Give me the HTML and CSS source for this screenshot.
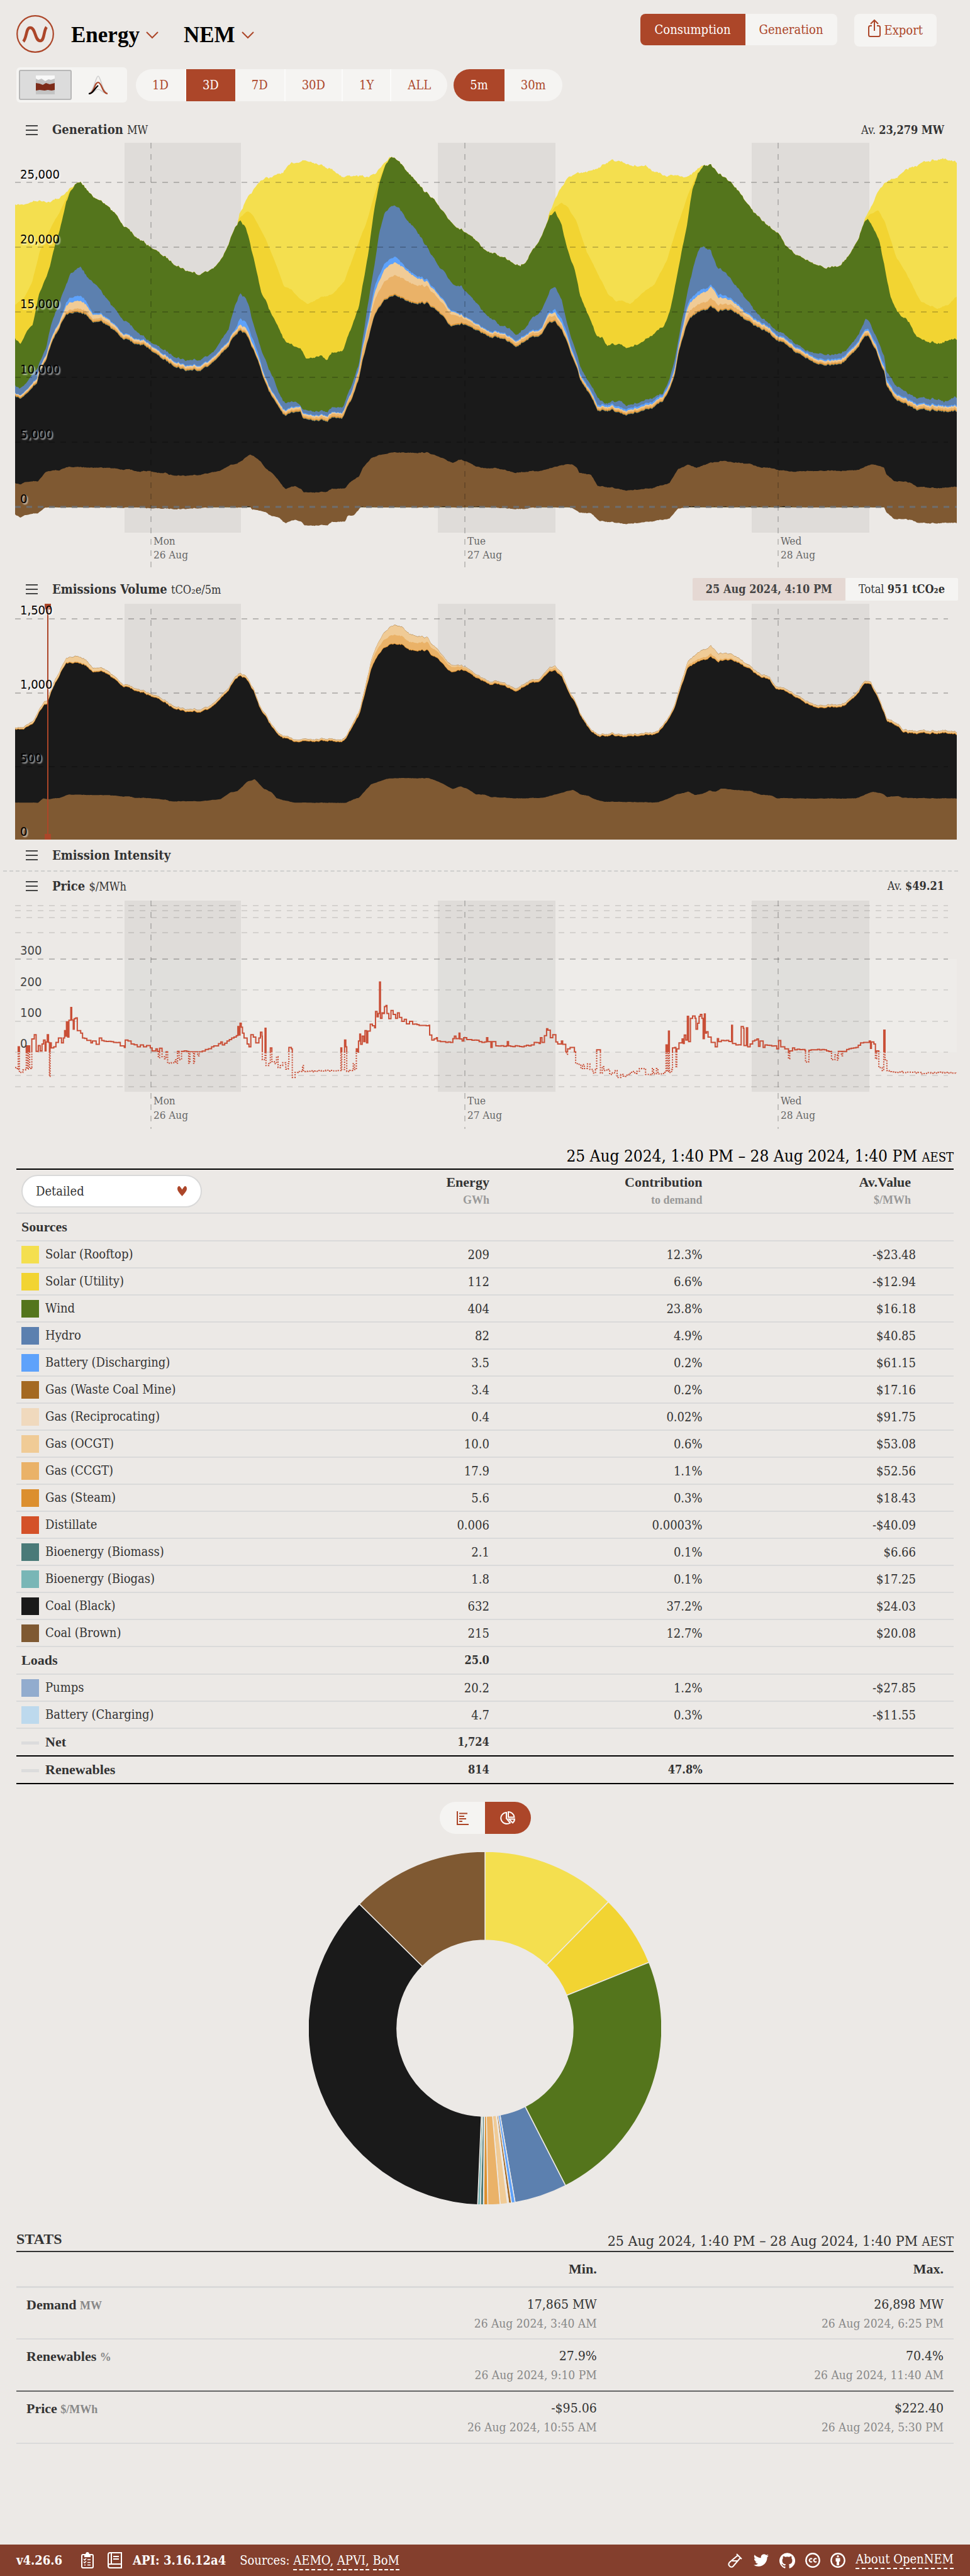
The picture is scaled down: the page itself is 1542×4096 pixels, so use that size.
FILE: index.html
```html
<!DOCTYPE html>
<html lang="en">
<head>
<meta charset="utf-8">
<meta name="viewport" content="width=device-width, initial-scale=1">
<title>OpenNEM: NEM</title>
<link rel="stylesheet" href="styles.css">
</head>
<body>
<header class="topbar">
  <nav class="brand" aria-label="Main">
    <a class="logo" href="#" aria-label="OpenNEM home">
      <svg width="60" height="60" viewBox="0 0 60 60"><circle cx="30" cy="30" r="28.8" fill="none" stroke="#ac4629" stroke-width="2.2"/><path d="M11 42C17 36 15 20 22 20C31 20 29 41 38 41C45 41 43 25 48 19" fill="none" stroke="#ac4629" stroke-width="4.6"/></svg>
    </a>
    <button class="menu" type="button">Energy <svg width="20" height="12" viewBox="0 0 20 12"><path d="M1 1l9 9 9-9"/></svg></button>
    <button class="menu" type="button">NEM <svg width="20" height="12" viewBox="0 0 20 12"><path d="M1 1l9 9 9-9"/></svg></button>
  </nav>
  <div class="actions">
    <div class="group">
      <button class="on" type="button">Consumption</button><button type="button">Generation</button>
    </div>
    <button class="export" type="button"><svg width="20" height="28" viewBox="0 0 20 28"><path d="M6 10H3.5Q1 10 1 12.500V24.500Q1 27 3.500 27H16.500Q19 27 19 24.500V12.500Q19 10 16.500 10H14M10 18V1.500M4 7l6-6 6 6"/></svg>Export</button>
  </div>
</header>

<div class="filters">
  <div class="views">
    <button class="on" type="button" aria-label="Time series">
      <svg width="30" height="30" viewBox="0 0 30 30"><path fill="#f8f8f8" d="M0 0H30V12H0z"/><path fill="#c3c3c3" d="M0 5l4 2 5-2 6 4 5-3 4 1 6-2V30H0z"/><path fill="#7d2c1a" d="M0 12l6 1 5 2 5-3 6 2 8-2V23l-5 1-6-1-5 1-8-1-6 1z"/></svg>
    </button>
    <button type="button" aria-label="Time of day">
      <svg width="30" height="30" viewBox="0 0 30 30" fill="none"><path stroke="#ccc" stroke-width="1.500" d="M0 28C8 28 11 1 15 1S22 28 30 28M2 28C9 28 10 22 15 22S21 28 28 28"/><path stroke="#ac4629" stroke-width="2.200" d="M1 29C9 28 9 11 15 11S21 28 30 29"/><path stroke="#000" stroke-width="2.200" d="M0 29C7 29 8 22 15 16"/></svg>
    </button>
  </div>
  <div class="pills range">
    <button type="button">1D</button><button class="on" type="button">3D</button><button type="button">7D</button><button type="button">30D</button><button type="button">1Y</button><button type="button">ALL</button>
  </div>
  <div class="pills interval">
    <button class="on" type="button">5m</button><button type="button">30m</button>
  </div>
</div>

<main>
  <section class="panel">
    <div class="panel-head">
      <button class="burger" type="button" aria-label="Generation options"></button>
      <h2>Generation <small>MW</small></h2>
      <p class="avg">Av. <b>23,279 MW</b></p>
    </div>
    <svg class="chart" id="generation" viewBox="0 0 1497 676" role="img" aria-label="Generation by source"></svg>
  </section>

  <section class="panel">
    <div class="panel-head">
      <button class="burger" type="button" aria-label="Emissions options"></button>
      <h2>Emissions Volume <small>tCO₂e/5m</small></h2>
      <p class="readout"><b class="when">25 Aug 2024, 4:10 PM</b><span class="total">Total <b>951 tCO₂e</b></span></p>
    </div>
    <svg class="chart" id="emissions" viewBox="0 0 1497 375" role="img" aria-label="Emissions volume"></svg>
  </section>

  <section class="panel closed">
    <div class="panel-head">
      <button class="burger" type="button" aria-label="Intensity options"></button>
      <h2>Emission Intensity</h2>
    </div>
  </section>

  <section class="panel">
    <div class="panel-head">
      <button class="burger" type="button" aria-label="Price options"></button>
      <h2>Price <small>$/MWh</small></h2>
      <p class="avg">Av. <b>$49.21</b></p>
    </div>
    <svg class="chart" id="price" viewBox="0 0 1497 364" role="img" aria-label="Price"></svg>
  </section>

  <section class="summary">
    <p class="period">25 Aug 2024, 1:40 PM – 28 Aug 2024, 1:40 PM <small>AEST</small></p>
    <table class="sources">
      <colgroup><col class="c1"><col class="c2"><col class="c3"><col class="c4"></colgroup>
      <thead>
        <tr>
          <th scope="col"><div class="select"><select aria-label="Grouping"><option>Detailed</option></select><svg width="15" height="16" viewBox="0 0 15 16"><path fill="#ac4629" d="M0 4.500Q0 0 3 0 4 0 7.500 5.500 11 0 12 0 15 0 15 4.500 15 8 7.500 16 0 8 0 4.500z"/></svg></div></th>
          <th scope="col">Energy<small>GWh</small></th>
          <th scope="col">Contribution<small>to demand</small></th>
          <th scope="col">Av.Value<small>$/MWh</small></th>
        </tr>
      </thead>
      <tbody>
        <tr class="head"><th scope="row">Sources</th><td></td><td></td><td></td></tr>
        <tr><th scope="row"><i class="rooftop"></i>Solar (Rooftop)</th><td>209</td><td>12.3%</td><td>-$23.48</td></tr>
        <tr><th scope="row"><i class="utility"></i>Solar (Utility)</th><td>112</td><td>6.6%</td><td>-$12.94</td></tr>
        <tr><th scope="row"><i class="wind"></i>Wind</th><td>404</td><td>23.8%</td><td>$16.18</td></tr>
        <tr><th scope="row"><i class="hydro"></i>Hydro</th><td>82</td><td>4.9%</td><td>$40.85</td></tr>
        <tr><th scope="row"><i class="discharging"></i>Battery (Discharging)</th><td>3.5</td><td>0.2%</td><td>$61.15</td></tr>
        <tr><th scope="row"><i class="waste"></i>Gas (Waste Coal Mine)</th><td>3.4</td><td>0.2%</td><td>$17.16</td></tr>
        <tr><th scope="row"><i class="recip"></i>Gas (Reciprocating)</th><td>0.4</td><td>0.02%</td><td>$91.75</td></tr>
        <tr><th scope="row"><i class="ocgt"></i>Gas (OCGT)</th><td>10.0</td><td>0.6%</td><td>$53.08</td></tr>
        <tr><th scope="row"><i class="ccgt"></i>Gas (CCGT)</th><td>17.9</td><td>1.1%</td><td>$52.56</td></tr>
        <tr><th scope="row"><i class="steam"></i>Gas (Steam)</th><td>5.6</td><td>0.3%</td><td>$18.43</td></tr>
        <tr><th scope="row"><i class="distillate"></i>Distillate</th><td>0.006</td><td>0.0003%</td><td>-$40.09</td></tr>
        <tr><th scope="row"><i class="biomass"></i>Bioenergy (Biomass)</th><td>2.1</td><td>0.1%</td><td>$6.66</td></tr>
        <tr><th scope="row"><i class="biogas"></i>Bioenergy (Biogas)</th><td>1.8</td><td>0.1%</td><td>$17.25</td></tr>
        <tr><th scope="row"><i class="black"></i>Coal (Black)</th><td>632</td><td>37.2%</td><td>$24.03</td></tr>
        <tr><th scope="row"><i class="brown"></i>Coal (Brown)</th><td>215</td><td>12.7%</td><td>$20.08</td></tr>
        <tr class="head"><th scope="row">Loads</th><td>25.0</td><td></td><td></td></tr>
        <tr><th scope="row"><i class="pumps"></i>Pumps</th><td>20.2</td><td>1.2%</td><td>-$27.85</td></tr>
        <tr><th scope="row"><i class="charging"></i>Battery (Charging)</th><td>4.7</td><td>0.3%</td><td>-$11.55</td></tr>
        <tr class="head strong"><th scope="row"><i class="dash"></i>Net</th><td>1,724</td><td></td><td></td></tr>
        <tr class="head strong"><th scope="row"><i class="dash"></i>Renewables</th><td>814</td><td>47.8%</td><td></td></tr>
      </tbody>
    </table>

    <div class="toggle">
      <button type="button" aria-label="Bar chart"><svg width="20" height="22" viewBox="0 0 20 22"><path d="M2 0V21H20M5 3.500H18M5 8H13M5 12H16M5 16H10"/></svg></button>
      <button class="on" type="button" aria-label="Pie chart"><svg width="24" height="22" viewBox="0 0 24 22"><path d="M10 2A9.500 9 0 1 0 16 18.500L10 11.500zM13 1V9.500H22.500A9.500 9 0 0 0 13 1zM14 12.500H23Q23 16 20 18.500z"/></svg></button>
    </div>
    <svg class="donut" id="donut" viewBox="0 0 560 560" role="img" aria-label="Share of energy by source"></svg>
  </section>

  <section class="stats">
    <div class="stats-head"><h2>STATS</h2><p>25 Aug 2024, 1:40 PM – 28 Aug 2024, 1:40 PM <small>AEST</small></p></div>
    <table>
      <colgroup><col class="s1"><col class="s2"><col class="s3"></colgroup>
      <thead><tr><td></td><th scope="col">Min.</th><th scope="col">Max.</th></tr></thead>
      <tbody>
        <tr><th scope="row">Demand <small>MW</small></th><td>17,865 MW<time>26 Aug 2024, 3:40 AM</time></td><td>26,898 MW<time>26 Aug 2024, 6:25 PM</time></td></tr>
        <tr class="rule"><th scope="row">Renewables <small>%</small></th><td>27.9%<time>26 Aug 2024, 9:10 PM</time></td><td>70.4%<time>26 Aug 2024, 11:40 AM</time></td></tr>
        <tr><th scope="row">Price <small>$/MWh</small></th><td>-$95.06<time>26 Aug 2024, 10:55 AM</time></td><td>$222.40<time>26 Aug 2024, 5:30 PM</time></td></tr>
      </tbody>
    </table>
  </section>
</main>

<footer>
  <div class="foot-left">
    <b class="version">v4.26.6</b>
    <a href="#" aria-label="Changelog"><svg width="20" height="26" viewBox="0 0 20 26" fill="none" stroke="#fff" stroke-width="2"><rect x="1" y="4" width="18" height="21" rx="2"/><path fill="#fff" d="M6 4H8Q8 1 10 1T12 4H14V7H6z"/><path stroke-width="1.600" d="M4 11l1.500 1.500L8 10M10 12H15M4 15.500l1.500 1.500L8 14.500M10 16.500H15M5 20.500H7M10 20.500H15"/></svg></a>
    <a href="#" aria-label="Documentation"><svg width="23" height="26" viewBox="0 0 23 26" fill="none" stroke="#fff" stroke-width="2"><path d="M4 1H22V25H4Q1 25 1 22V4Q1 1 4 1zM1 21Q1 19 4 19H22M6 1V19M9 7H18M9 11H18"/></svg></a>
    <b class="api">API: 3.16.12a4</b>
    <span>Sources: <a class="link" href="#">AEMO,</a> <a class="link" href="#">APVI,</a> <a class="link" href="#">BoM</a></span>
  </div>
  <div class="foot-right">
    <a href="#" aria-label="Labs"><svg width="24" height="24" viewBox="0 0 24 24" fill="none" stroke="#fff" stroke-width="2"><path d="M14 2L22 10M16 4L2.500 15.500Q0 19 3 21.500T8.500 21.500L20 8M7 13H15"/></svg></a>
    <a href="#" aria-label="Twitter"><svg width="26" height="24" viewBox="0 0 24 24" fill="#fff"><path d="M23.950 4.570a10 10 0 0 1-2.820.770 4.960 4.960 0 0 0 2.160-2.720c-.950.550-2 .950-3.120 1.180a4.920 4.920 0 0 0-8.380 4.480C7.690 8.090 4.070 6.130 1.640 3.160a4.920 4.920 0 0 0 1.520 6.570 4.900 4.900 0 0 1-2.230-.610v.060a4.920 4.920 0 0 0 3.950 4.830 5 5 0 0 1-2.210.080 4.940 4.940 0 0 0 4.600 3.420A9.870 9.870 0 0 1 0 19.540a14 14 0 0 0 7.550 2.210c9.050 0 14-7.500 14-13.980v-.640a10 10 0 0 0 2.400-2.560z"/></svg></a>
    <a href="#" aria-label="GitHub"><svg width="25" height="25" viewBox="0 0 24 24" fill="#fff"><path d="M12 .300a12 12 0 0 0-3.800 23.380c.600.120.830-.260.830-.570v-2.230c-3.340.720-4.040-1.420-4.040-1.420-.550-1.390-1.330-1.760-1.330-1.760-1.090-.740.080-.730.080-.730 1.200.090 1.840 1.240 1.840 1.240 1.070 1.830 2.810 1.300 3.490 1 .110-.780.420-1.310.760-1.610-2.660-.300-5.470-1.330-5.470-5.930 0-1.310.470-2.380 1.240-3.220-.140-.300-.540-1.520.100-3.180 0 0 1.010-.320 3.300 1.230a11.500 11.500 0 0 1 6.020 0c2.280-1.550 3.290-1.230 3.290-1.230.640 1.660.240 2.880.120 3.180a4.650 4.650 0 0 1 1.230 3.220c0 4.610-2.800 5.630-5.480 5.920.420.360.810 1.100.810 2.220v3.300c0 .320.220.700.830.580A12 12 0 0 0 12 .300"/></svg></a>
    <a href="#" aria-label="Creative Commons"><svg width="24" height="24" viewBox="0 0 24 24" fill="none" stroke="#fff" stroke-width="2.400"><circle cx="12" cy="12" r="10.700"/><path stroke-width="2" d="M11 10A2.600 2.600 0 1 0 11 14M18 10A2.600 2.600 0 1 0 18 14"/></svg></a>
    <a href="#" aria-label="Attribution"><svg width="24" height="24" viewBox="0 0 24 24" fill="none" stroke="#fff" stroke-width="2.400"><circle cx="12" cy="12" r="10.700"/><circle cx="12" cy="5.800" r="1.700" fill="#fff" stroke="none"/><path fill="#fff" stroke="none" d="M8.500 8.500H15.500V14H14V20H10V14H8.500z"/></svg></a>
    <a class="link" href="#">About OpenNEM</a>
  </div>
</footer>
<script src="charts.js"></script>
</body>
</html>
```
FILE: styles.css
```css
:root {
  --bg: #ece9e6;
  --accent: #ac4629;
  --soft: #f5f4f2;
  --ink: #333;
  --line: #dadada;
  --body: "DejaVu Serif Condensed", "DejaVu Serif", serif;
  --display: "Liberation Serif", serif;
}
* { box-sizing: border-box; }
body { margin: 0; background: var(--bg); color: var(--ink); font: 20px/24px var(--body); }
h2, p { margin: 0; font-weight: 400; }
button, select { font: inherit; color: inherit; border: 0; background: none; padding: 0; margin: 0; cursor: pointer; }
svg { display: block; }

.topbar { display: flex; justify-content: space-between; align-items: flex-start; padding: 22px 53px 0 26px; }
.brand { display: flex; align-items: center; gap: 40px; padding-top: 2px; }
.logo { margin-right: -13px; }
.menu { display: flex; align-items: center; gap: 10px; padding-top: 4px; font: 700 35px/44px var(--display); color: #000; }
.menu svg { fill: none; stroke: var(--accent); stroke-width: 2; }
.actions { display: flex; align-items: flex-start; gap: 27px; color: var(--accent); }
.group { display: flex; border-radius: 8px; overflow: hidden; background: var(--soft); }
.group button { height: 50px; padding: 0 22px; }
.group .on { padding: 0 23px; }
.on { background: var(--accent); color: #fff; }
.export { display: flex; align-items: center; gap: 6px; height: 52px; padding: 0 22px; border-radius: 8px; background: var(--soft); }
.export svg { fill: none; stroke: var(--accent); stroke-width: 2; margin-bottom: 6px; }

.filters { display: flex; align-items: center; padding: 23px 26px 0; color: var(--accent); }
.views { display: flex; padding: 4px; border-radius: 6px; background: var(--soft); margin-right: 14px; }
.views button { display: grid; place-items: center; width: 84px; height: 48px; border-radius: 3px; }
.views .on { background: #dcdcdc; border: 2px solid #b7b7b7; }
.pills { display: flex; height: 51px; border-radius: 26px; overflow: hidden; background: var(--soft); margin-right: 10px; }
.pills button { padding: 0 26px; border-right: 2px solid #fbfbfa; }
.pills .on, .pills button:last-child { border-right: 0; }

main { padding-top: 23px; }
.panel-head { display: flex; align-items: center; height: 46px; padding: 0 19px 0 41px; }
.panel:first-child .panel-head { height: 41px; }
.panel:first-child + .panel .panel-head { height: 57px; padding-top: 13px; padding-bottom: 2px; }
.burger { width: 19px; height: 16px; border-top: 2px solid #444; border-bottom: 2px solid #444; background: linear-gradient(#444, #444) center / 100% 2px no-repeat; }
.panel-head h2 { font-size: 20px; font-weight: 700; margin-left: 23px; }
.panel-head small { font-size: 18px; font-weight: 400; }
.avg { margin-left: auto; padding-right: 22px; font-size: 18px; }
.readout { display: flex; margin-left: auto; font-size: 18px; line-height: 36px; }
.when, .total { padding: 0 21px; border-radius: 2px; }
.when { background: #e5d8d3; color: #444; }
.total { background: var(--soft); }
.chart { width: calc(100% - 45px); height: auto; margin-left: 24px; overflow: visible; }
.closed { margin: 0 19px 0 5px; border-bottom: 2px dashed #cfcfcd; }
.closed .panel-head { padding-left: 36px; height: 49px; }
.tick { font: 17px var(--body); fill: #666; }
.level { font: 20px "DejaVu Sans Condensed", "DejaVu Sans", sans-serif; fill: #000; text-shadow: 2px 2px 2px rgba(255, 255, 255, .7); }
.level.plain { fill: #444; text-shadow: none; }

.summary, .stats { margin: 0 26px; }
.period { padding-top: 25px; text-align: right; font-size: 26px; line-height: 35px; color: #000; border-bottom: 2px solid #000; }
.period small, .stats-head small { font-size: 20px; }
table { width: 100%; border-collapse: collapse; table-layout: fixed; }
td { text-align: right; }
th { text-align: left; font-weight: 400; }
.sources { margin-bottom: 28px; }
.c1 { width: 34%; }
.c2 { width: 17%; }
.c3 { width: 23%; }
.sources tr { height: 43px; border-bottom: 2px solid var(--line); }
.sources thead tr { height: 69px; }
.sources th, .sources td { padding: 0 8px; }
.sources tr > :nth-child(3) { padding-right: 12px; }
.sources td:nth-child(4) { padding-right: 60px; }
.sources thead th { text-align: right; font: 700 22px/28px var(--display); }
.sources thead th:nth-child(4) { padding-right: 68px; }
.sources thead small { display: block; font-size: 18px; color: #999; }
.sources .head { height: 44px; font-weight: 700; }
.head th { font: 700 22px/24px var(--display); }
.head td { font-size: 18px; }
.sources .strong { border-bottom-color: #000; }
.sources i { display: inline-block; width: 28px; height: 28px; margin-right: 10px; vertical-align: middle; }
.sources .dash { height: 5px; background: #dcdcdc; }
.select { display: flex; align-items: center; width: 287px; height: 52px; padding-right: 22px; border: 2px solid #d9d9d9; border-radius: 26px; background: #fff; font: 20px/24px var(--body); }
.select select { flex: 1; appearance: none; height: 46px; padding-left: 21px; outline: 0; }
.rooftop { background: #f4df4f; }
.utility { background: #f2d432; }
.wind { background: #54751c; }
.hydro { background: #5c80af; }
.discharging { background: #5ea2fb; }
.waste { background: #a46922; }
.recip { background: #f0d9bd; }
.ocgt { background: #f0cb96; }
.ccgt { background: #eab268; }
.steam { background: #dc8f2e; }
.distillate { background: #d45128; }
.biomass { background: #4a7a78; }
.biogas { background: #79b6b6; }
.black { background: #1a1a1a; }
.brown { background: #7f5932; }
.pumps { background: #92acce; }
.charging { background: #bdd9ed; }

.toggle { display: flex; width: 145px; height: 51px; margin: 0 auto 29px; border-radius: 26px; overflow: hidden; background: var(--soft); }
.toggle button { flex: 1; display: grid; place-items: center; }
.toggle svg { fill: none; stroke: var(--accent); stroke-width: 2; }
.toggle .on svg { stroke: #fff; }
.donut { width: 560px; max-width: 100%; height: auto; margin: 0 auto; }

.stats { padding-top: 37px; }
.stats-head { display: flex; justify-content: space-between; align-items: flex-end; border-bottom: 2px solid #333; }
.stats-head h2 { font: 700 24px/37px var(--display); }
.stats-head p { font-size: 23px; line-height: 30px; }
.s1 { width: 26%; }
.s2, .s3 { width: 37%; }
.stats th, .stats td { padding: 0 16px; vertical-align: top; }
.stats thead tr { height: 55px; border-bottom: 3px solid var(--line); }
.stats thead th { text-align: right; vertical-align: middle; font: 700 22px/24px var(--display); }
.stats tbody tr { height: 83px; border-bottom: 2px solid var(--line); }
.stats .rule { border-bottom-color: #666; }
.stats tbody th, .stats tbody td { padding-top: 11px; line-height: 30px; }
.stats tbody td { font-size: 21px; }
.stats tbody th { font: 700 22px/32px var(--display); }
.stats th small { font-size: 18px; color: #888; }
.stats time { display: block; font-size: 19px; color: #888; }

footer { display: flex; justify-content: space-between; align-items: center; height: 50px; margin-top: 160px; padding: 0 26px; background: #843f2d; color: #fff; }
footer a { color: #fff; text-decoration: none; }
.foot-left, .foot-right { display: flex; align-items: center; gap: 16px; }
.foot-left { gap: 22px; }
.version { margin-right: 8px; }
.api { margin-left: -5px; }
.link { border-bottom: 2px dashed #fff; padding-bottom: 2px; }
```
FILE: charts.js
```js
// Plot space: 3044 units wide from x = 50, split into a first and a second half.
const X0 = 50, X1 = 3094, HALF = 1568, STEP = 3.52, W = 1497;
const C = {
  rooftop: '#f4df4f', utility: '#f2d432', wind: '#54751c', hydro: '#5c80af', battery: '#5ea2fb',
  waste: '#a46922', recip: '#f0d9bd', ocgt: '#f0cb96', ccgt: '#eab268', steam: '#dc8f2e',
  distillate: '#d45128', biomass: '#4a7a78', biogas: '#79b6b6', black: '#1a1a1a', brown: '#7f5932'
};
const parse = s => s.trim().split(/\s+/).map(p => p.split(',').map(Number));
const join = (a, b) => parse(a).concat(parse(b).map(([x, ...v]) => [x + HALF, ...v]));
const at = (pts, x, k = 1) => {
  if (x <= pts[0][0]) return pts[0][k];
  for (let i = 1; i < pts.length; i++) {
    if (x <= pts[i][0]) {
      const a = pts[i - 1], b = pts[i];
      return a[k] + (b[k] - a[k]) * (x - a[0]) / (b[0] - a[0] || 1);
    }
  }
  return pts[pts.length - 1][k];
};
let seed = 7;
const rnd = () => (seed = seed * 16807 % 2147483647) / 2147483647 - 0.5;
const xs = [];
for (let x = X0; x < X1; x += STEP) xs.push(x);
xs.push(X1);
let drift = 0;
const noise = xs.map(() => { drift = drift * 0.6 + rnd() * 6; return drift; });
const noise2 = xs.map(() => rnd() * 5);
const curve = (pts, n = 1, k = 1) => xs.map((x, i) => at(pts, x, k) + noise[i] * n + noise2[i] * n * 0.5);
const area = (top, base, color) => {
  const up = top.map((y, i) => xs[i].toFixed(1) + ' ' + y.toFixed(1));
  const down = typeof base === 'number' ? [X1 + ' ' + base, X0 + ' ' + base]
    : base.map((y, i) => xs[i].toFixed(1) + ' ' + y.toFixed(1)).reverse();
  return `<path fill="${color}" d="M${up.join('L')}L${down.join('L')}Z"/>`;
};
const sub = (a, b) => a.map((v, i) => v - b[i]);
const px = x => Math.round((x - X0) * W / (X1 - X0));
const nights = h => [[403, 781], [1417, 1796], [2432, 2811]]
  .map(([a, b]) => `<rect x="${px(a)}" width="${px(b) - px(a)}" height="${h}" fill="#000" fill-opacity=".055"/>`).join('');
const mids = [[489, 'Mon', '26 Aug'], [1503, 'Tue', '27 Aug'], [2517, 'Wed', '28 Aug']];
const vlines = (y0, y1) => mids.map(([x]) =>
  `<path d="M${px(x)} ${y0}V${y1}" stroke="#000" stroke-opacity=".18" stroke-width="2" stroke-dasharray="9 9"/>`).join('');
const ticks = (y, gap) => mids.map(([x, d, m]) =>
  `<text class="tick" x="${px(x) + 4}" y="${y}">${d}</text><text class="tick" x="${px(x) + 4}" y="${y + gap}">${m}</text>`).join('');
const hline = (y, o = 0.2, w = 2) =>
  `<path d="M0 ${y}H${W - 14}" stroke="#000" stroke-opacity="${o}" stroke-width="${w}" stroke-dasharray="9 9"/>`;
const plot = (y, h, outH, body) =>
  `<svg width="${W}" height="${outH}" viewBox="${X0} ${y} ${X1 - X0} ${h}" preserveAspectRatio="none">${body}</svg>`;
const level = (y, t, c = '') => `<text class="level ${c}" x="8" y="${y}">${t}</text>`;

// Generation
{
  const brown = curve(join(`50,1232 68,1236 80,1228 125,1224 150,1192 195,1188 220,1178 330,1180 420,1187 450,1194 485,1190 510,1198 540,1198 545,1203 600,1207 650,1203 715,1190 745,1172 770,1164 812,1137 845,1160 860,1184 880,1196 905,1228 925,1253 955,1240 975,1250 982,1262 1055,1260 1075,1250 1118,1248 1135,1226 1163,1208 1175,1180 1200,1150 1230,1137 1270,1130 1385,1130 1420,1145 1465,1164 1485,1152 1510,1160 1540,1178`,
    `0,1182 40,1182 100,1196 185,1190 245,1172 282,1168 298,1182 305,1198 343,1204 365,1240 410,1246 460,1256 540,1248 598,1232 625,1184 655,1170 685,1182 720,1166 770,1158 860,1168 890,1180 935,1182 955,1190 990,1194 1050,1190 1200,1190 1255,1168 1290,1180 1298,1202 1322,1224 1375,1230 1400,1244 1480,1248 1526,1244`), 0.4);
  const low = curve(join(`50,1336 68,1346 80,1338 125,1330 148,1311 440,1312 520,1316 600,1317 690,1311 812,1311 815,1320 850,1324 880,1340 905,1348 925,1366 955,1352 975,1358 985,1372 1060,1370 1075,1360 1118,1358 1125,1340 1145,1338 1168,1311`,
    `0,1311 120,1317 180,1311 280,1312 305,1330 343,1332 370,1356 460,1367 540,1358 598,1350 625,1315 650,1310 1290,1311 1298,1328 1322,1350 1380,1354 1405,1364 1526,1364`), 0.4);
  const black = curve(join(`50,944 68,952 100,922 120,900 130,860 150,822 165,775 195,712 215,674 240,666 280,672 300,696 330,696 400,750 430,768 475,778 510,808 545,832 600,858 650,856 685,836 740,780 755,745 778,722 795,738 815,780 840,840 860,905 900,980 925,1012 955,994 972,990 980,1018 1060,1024 1080,1012 1108,1016 1120,990 1140,948 1163,880 1175,820 1195,740 1213,672 1243,622 1280,610 1330,632 1385,636 1420,668 1460,712 1475,702 1505,706 1535,726`,
    `0,738 25,750 45,748 85,764 105,778 135,756 185,738 205,700 228,696 250,724 275,790 298,854 308,890 340,940 365,990 410,990 460,1006 540,982 575,962 600,920 615,870 628,790 650,712 665,686 700,660 733,648 755,662 800,656 830,680 860,700 890,720 920,736 950,760 1010,800 1080,836 1120,842 1160,830 1200,794 1225,750 1240,746 1265,790 1280,840 1293,870 1297,905 1320,944 1345,966 1400,988 1470,990 1485,998 1526,995`));
  // Thickness of CCGT, OCGT and battery above black coal
  const thin = join(`50,5,3,0 200,8,10,3 225,10,24,14 265,12,26,16 300,10,14,4 340,10,10,3 400,8,6,2 700,8,5,2 760,8,6,3 778,8,10,20 800,8,10,18 830,6,6,14 860,8,6,3 1000,9,5,2 1120,12,4,1 1160,24,4,6 1195,40,14,14 1215,50,26,20 1250,62,42,18 1285,66,42,18 1310,66,36,6 1385,54,14,6 1420,42,12,4 1460,38,10,3 1500,18,6,2`,
    `0,10,5,2 185,12,5,3 205,18,10,5 228,18,10,10 250,12,8,14 300,8,4,5 450,8,4,5 600,10,4,6 630,14,6,10 655,24,24,10 700,24,32,12 735,26,38,5 760,20,22,10 800,16,14,5 860,10,8,4 950,8,5,3 1200,8,5,4 1235,10,6,5 1290,6,6,10 1330,10,5,3`);
  const steam = black.map(y => y - 5);
  const ccgt = sub(black, curve(thin, 0, 1)).map(y => y - 2);
  const ocgt = sub(ccgt, curve(thin, 0, 2));
  const batt = sub(ocgt, curve(thin, 0, 3)).map(y => y - 1);
  const hydro = curve(join(`50,908 65,918 85,900 95,885 120,852 150,780 165,710 205,600 230,535 262,515 285,548 315,575 360,640 405,692 450,735 500,770 550,802 600,824 650,820 690,798 740,722 760,640 778,598 795,620 808,655 820,706 845,785 865,840 885,882 900,930 925,970 940,966 955,958 970,966 980,988 1060,992 1078,978 1110,978 1140,900 1163,830 1190,640 1210,520 1228,395 1245,330 1270,312 1290,316 1320,362 1345,385 1370,430 1395,470 1420,516 1440,536 1465,570 1490,575 1530,624`,
    `0,668 50,708 80,716 105,738 130,716 155,684 185,656 215,584 230,582 250,625 265,700 290,780 310,850 335,895 365,945 385,965 440,958 460,975 500,962 575,936 598,888 615,820 635,700 655,600 680,495 695,452 710,445 730,460 750,512 790,545 860,640 890,680 950,728 1000,765 1040,790 1120,808 1170,790 1200,755 1232,688 1245,700 1270,755 1293,820 1297,858 1325,902 1360,932 1400,948 1470,952 1485,965 1520,948`));
  const wind = curve(join(`50,752 68,770 90,722 108,705 125,610 160,520 185,420 200,370 215,300 230,262 245,240 262,234 305,282 335,300 380,345 405,380 440,415 490,448 530,478 560,500 600,525 645,538 690,520 720,485 740,440 760,380 778,356 795,385 810,440 825,505 845,595 875,660 900,715 928,770 972,780 990,818 1035,806 1057,820 1075,798 1110,790 1135,720 1163,640 1190,480 1213,310 1230,225 1248,170 1267,150 1290,162 1320,200 1350,230 1370,260 1400,285 1430,330 1465,370 1500,395 1530,420`,
    `0,458 70,486 115,510 132,498 155,460 185,410 210,345 228,330 248,370 265,450 290,520 308,610 345,700 360,740 380,748 395,772 440,770 463,784 510,762 580,710 600,660 615,580 640,440 655,370 670,265 690,205 710,174 730,176 765,212 800,235 830,275 860,320 910,375 950,400 970,445 1010,475 1060,498 1105,518 1145,510 1180,475 1205,430 1225,370 1238,358 1255,380 1275,425 1295,530 1313,620 1345,680 1370,695 1390,735 1415,758 1480,768 1500,758 1526,755`));
  const utility = curve(join(`50,640 80,615 105,565 130,460 165,385 200,320 225,265 245,240 255,900 760,900 770,360 780,345 800,332 815,338 850,400 880,470 920,580 945,592 975,622 995,637 1035,615 1075,605 1115,560 1150,460 1185,370 1210,280 1230,215 1248,170 1262,900`,
    `200,900 205,345 228,315 248,300 270,318 295,360 330,465 365,535 400,605 425,628 445,625 470,638 510,600 550,570 590,490 625,370 655,280 690,200 705,900 1220,900 1228,362 1245,340 1272,325 1295,370 1330,480 1370,550 1410,630 1465,652 1500,640 1526,612`), 0.5)
    .map((y, i) => Math.min(y, wind[i]));
  const rooftop = curve(join(`50,308 80,306 125,292 165,298 205,278 230,252 245,240 255,900 765,900 775,335 800,290 845,225 910,205 945,170 980,160 1015,165 1075,190 1110,215 1150,210 1185,217 1215,205 1240,170 1262,150 1270,900`,
    `200,900 205,345 240,260 275,212 350,195 405,160 445,164 470,178 520,178 550,198 590,215 625,208 660,215 685,195 705,175 715,900 1218,900 1225,365 1245,325 1270,265 1300,232 1340,212 1370,188 1430,162 1475,155 1526,168`))
    .map((y, i) => Math.min(y, utility[i]));
  const Z = 1311;
  document.getElementById('generation').innerHTML = nights(620) + plot(102, 1294, 620,
    area(rooftop, Z, C.rooftop) + area(utility, Z, C.utility) + area(wind, Z, C.wind) + area(hydro, Z, C.hydro) +
    area(batt, Z, C.battery) + area(ocgt, Z, C.ocgt) + area(ccgt, Z, C.ccgt) + area(steam, Z, C.steam) +
    area(black.map(y => y - 1.5), Z, C.biomass) + area(black, Z, C.black) + area(brown, low, C.brown)) +
    [63, 166, 269, 373, 476].map(y => hline(y)).join('') +
    `<path d="M0 579H${W}" stroke="#6e6e6e" stroke-width="3" stroke-dasharray="9 9"/>` +
    vlines(0, 676) + ticks(639, 22) +
    level(57, '25,000') + level(160, '20,000') + level(263, '15,000') + level(367, '10,000') + level(470, '5,000') + level(573, '0');
}

// Emissions
{
  const brown = curve(join(`50,1129 125,1129 140,1108 160,1112 200,1104 220,1090 340,1092 420,1100 440,1106 480,1106 540,1116 550,1122 650,1122 715,1112 745,1080 770,1070 800,1028 825,1015 855,1062 880,1078 895,1108 945,1128 1120,1130 1145,1112 1163,1104 1185,1065 1200,1040 1250,1012 1300,1008 1390,1009 1420,1028 1465,1062 1487,1048 1510,1060 1540,1090`,
    `0,1090 20,1102 120,1108 190,1105 240,1084 285,1066 310,1090 335,1096 350,1110 385,1124 560,1128 600,1106 620,1088 658,1075 680,1093 705,1085 725,1070 745,1076 765,1060 860,1073 890,1090 930,1095 945,1108 1200,1109 1255,1075 1285,1085 1300,1102 1335,1096 1350,1106 1526,1109`), 0.3);
  const black = curve(join(`50,770 78,768 85,758 110,740 125,690 145,645 155,640 165,590 195,498 215,445 245,442 280,455 300,485 335,485 400,555 430,575 480,598 520,625 550,655 600,682 650,682 685,662 715,618 740,580 760,520 778,502 795,520 820,580 840,660 865,720 900,800 945,828 1060,824 1105,830 1122,812 1135,770 1165,690 1180,600 1200,480 1215,425 1240,368 1265,352 1300,352 1325,378 1385,382 1400,410 1415,420 1440,465 1463,488 1480,475 1505,480 1540,520`,
    `0,535 20,550 45,545 85,568 105,580 135,550 180,530 208,485 228,480 250,510 268,580 290,632 308,700 345,785 370,802 410,798 450,805 510,798 560,790 600,710 615,660 632,570 655,470 700,430 732,415 755,436 800,425 830,450 860,475 890,512 920,525 940,565 1000,605 1040,640 1080,662 1135,660 1165,650 1200,608 1225,548 1248,548 1270,610 1300,730 1335,752 1352,788 1480,788 1526,797`), 1.1);
  const thin = join(`50,3,4 200,5,15 245,6,26 280,6,22 300,6,14 400,5,5 740,6,6 778,4,8 860,5,5 1120,6,4 1165,14,4 1200,30,12 1215,34,20 1250,42,38 1280,46,48 1320,40,40 1385,40,22 1420,32,10 1463,26,8 1500,14,5`,
    `0,9,4 180,9,4 228,12,10 300,4,4 600,6,4 655,14,16 700,12,36 732,16,38 760,9,28 800,8,20 860,6,8 950,6,5 1526,6,6`);
  const ccgt = sub(black, curve(thin, 0, 1));
  const ocgt = sub(ccgt, curve(thin, 0, 2));
  const Z = 1311;
  document.getElementById('emissions').innerHTML = nights(375) +
    vlines(8, 375) + [24, 142].map(y => hline(y, 0.22)).join('') +
    plot(151, 1160, 375, area(ocgt.map(y => y - 2), Z, '#b58c58') + area(ocgt, Z, C.ocgt) + area(ccgt, Z, C.ccgt) +
      area(black.map(y => y - 3), Z, C.steam) + area(black, Z, C.black) + area(brown, Z, C.brown)) +
    hline(259, 0.2) +
    '<path d="M52 0V375" stroke="#ac4629" stroke-width="2"/><path d="M47 0h10v9H47zM47 366h10v9H47z" fill="#ac4629"/>' +
    level(17, '1,500') + level(135, '1,000') + level(252, '500') + level(369, '0');
}

// Price
{
  const pts = join(`50,1040 57,1050 60,935 64,1065 75,1052 84,1050 86,930 90,1048 93,930 97,1045 102,1040 104,895 112,873 118,958 125,928 131,955 137,920 142,900 147,955 150,910 154,873 158,912 161,1085 163,915 167,940 175,935 182,912 190,890 200,915 206,890 210,852 214,880 216,808 220,885 224,800 230,735 233,798 238,845 241,792 246,788 251,852 262,865 268,890 282,902 295,915 300,905 312,922 322,890 330,903 360,908 385,912 390,930 403,938 406,900 415,905 425,920 445,935 455,925 465,935 475,928 487,940 493,955 505,945 510,958 513,990 517,942 525,985 533,995 538,960 543,1018 555,1015 567,1000 570,1018 575,958 580,1000 588,958 605,958 611,1018 615,960 622,960 627,1018 630,960 640,980 645,960 665,948 685,935 700,930 715,910 720,925 735,905 750,890 765,878 770,832 773,875 777,815 781,835 785,865 790,890 800,920 806,935 812,873 820,885 828,915 838,890 843,860 848,880 849,1000 856,1000 858,840 861,1030 870,1020 875,940 880,1010 888,1020 895,985 900,1040 915,1015 925,1048 933,1020 935,938 943,945 946,1090 955,1065 975,1060 979,1030 982,1060 1090,1055 1103,940 1106,1050 1110,1050 1115,900 1119,935 1122,1060 1140,1055 1143,1020 1147,1050 1153,945 1157,962 1160,905 1164,870 1167,922 1172,880 1177,908 1181,852 1186,915 1190,855 1198,820 1212,838 1215,755 1220,782 1224,765 1228,606 1231,790 1236,762 1240,765 1244,730 1249,725 1252,765 1258,792 1265,750 1272,770 1280,790 1286,762 1292,785 1300,805 1308,795 1315,818 1325,805 1335,820 1370,826 1388,825 1390,875 1397,900 1412,888 1415,905 1435,908 1457,912 1465,893 1470,880 1475,893 1485,865 1488,895 1495,905 1500,888 1510,898 1535,900 1550,908`,
    `0,910 6,888 10,908 20,938 24,908 36,930 70,930 73,908 77,930 120,935 150,925 160,912 176,918 180,888 185,912 193,878 200,843 204,850 212,888 220,873 230,910 236,920 248,905 252,922 262,960 264,972 268,945 284,938 290,960 294,1020 305,1028 311,1045 316,1025 322,1045 332,1022 340,1050 350,1068 358,1050 362,950 370,950 374,1068 380,1035 385,1055 400,1050 404,1075 422,1055 428,1090 440,1075 455,1085 460,1075 475,1060 485,1070 500,1045 515,1050 520,1075 538,1075 542,1045 546,1072 555,1045 560,1072 582,1065 586,925 590,1060 594,855 597,1065 604,1050 607,940 614,938 618,1035 621,945 628,915 638,895 642,918 645,875 650,900 655,780 659,908 665,790 672,778 680,790 683,845 688,815 693,780 697,770 702,790 706,893 710,768 713,865 717,858 722,885 732,912 745,935 752,893 756,908 765,902 797,908 798,825 801,918 812,925 828,925 829,832 836,840 838,928 846,838 850,935 858,920 866,905 880,895 885,932 890,905 900,938 906,925 935,930 944,945 950,903 957,935 970,945 982,995 986,955 995,940 1002,950 1035,952 1037,1012 1047,1005 1048,952 1090,948 1105,955 1120,958 1121,1000 1132,975 1140,1002 1143,958 1153,980 1157,958 1170,948 1200,938 1215,915 1235,912 1243,905 1247,943 1250,910 1258,920 1263,995 1267,955 1271,955 1274,1040 1285,1055 1290,850 1294,1000 1300,1055 1315,1062 1400,1065 1410,1072 1450,1065 1526,1065`);
  let d = `M${pts[0][0]} ${pts[0][1]}`;
  pts.slice(1).forEach(([x, y], i) => {
    // Long gaps between samples get a small wobble so that the steps stay visible
    const [px0, py0] = pts[i];
    const n = Math.floor((x - px0) / 7);
    for (let k = 1; k < n; k++) d += `H${(px0 + (x - px0) * k / n).toFixed(1)}V${(py0 + (y - py0) * k / n + rnd() * 7).toFixed(1)}`;
    d += `H${x}V${y}`;
  });
  const s = 'fill="none" stroke="#c94f37" vector-effect="non-scaling-stroke"';
  const py = y => Math.round((y - 192) * 304 / 971);
  document.getElementById('price').innerHTML =
    `<rect y="${py(489)}" width="${W}" height="${py(962) - py(489)}" fill="#fff" fill-opacity=".15"/>` + nights(304) +
    [219, 243, 279, 356, 647, 805, 962, 1081, 1137].map(y => hline(py(y), 0.1)).join('') + hline(py(489), 0.22) +
    vlines(0, 363) + ticks(324, 23) +
    `<defs><clipPath id="above"><rect x="50" y="192" width="3044" height="770"/></clipPath><clipPath id="below"><rect x="50" y="962" width="3044" height="201"/></clipPath></defs>` +
    plot(192, 971, 304, `<g clip-path="url(#above)"><path ${s} stroke-width="2" d="${d}"/></g><g clip-path="url(#below)"><path ${s} stroke-width="2" stroke-dasharray="2 2" d="${d}"/></g>`) +
    level(86, '300', 'plain') + level(136, '200', 'plain') + level(185, '100', 'plain') + level(234, '0', 'plain');
}

// Donut: sweep of each slice in degrees
{
  const parts = [[44.3, C.rooftop], [23.8, C.utility], [84.8, C.wind], [17.3, C.hydro], [1.2, C.battery], [0.9, C.waste],
    [0.4, C.recip], [2.4, C.ocgt], [4, C.ccgt], [1.3, C.steam], [0.1, C.distillate], [1, C.biomass], [0.9, C.biogas],
    [132.3, C.black], [45.3, C.brown]];
  const total = parts.reduce((t, p) => t + p[0], 0);
  const pt = (r, a) => `${(280 + r * Math.sin(a)).toFixed(2)} ${(280 - r * Math.cos(a)).toFixed(2)}`;
  let a = 0;
  document.getElementById('donut').innerHTML = parts.map(([v, c]) => {
    const b = a + v / total * 2 * Math.PI, big = b - a > Math.PI ? 1 : 0;
    const path = `<path fill="${c}" stroke="#ece9e6" stroke-width="1.500" d="M${pt(281, a)}A281 281 0 ${big} 1 ${pt(281, b)}L${pt(140, b)}A140 140 0 ${big} 0 ${pt(140, a)}Z"/>`;
    a = b;
    return path;
  }).join('');
}
```
